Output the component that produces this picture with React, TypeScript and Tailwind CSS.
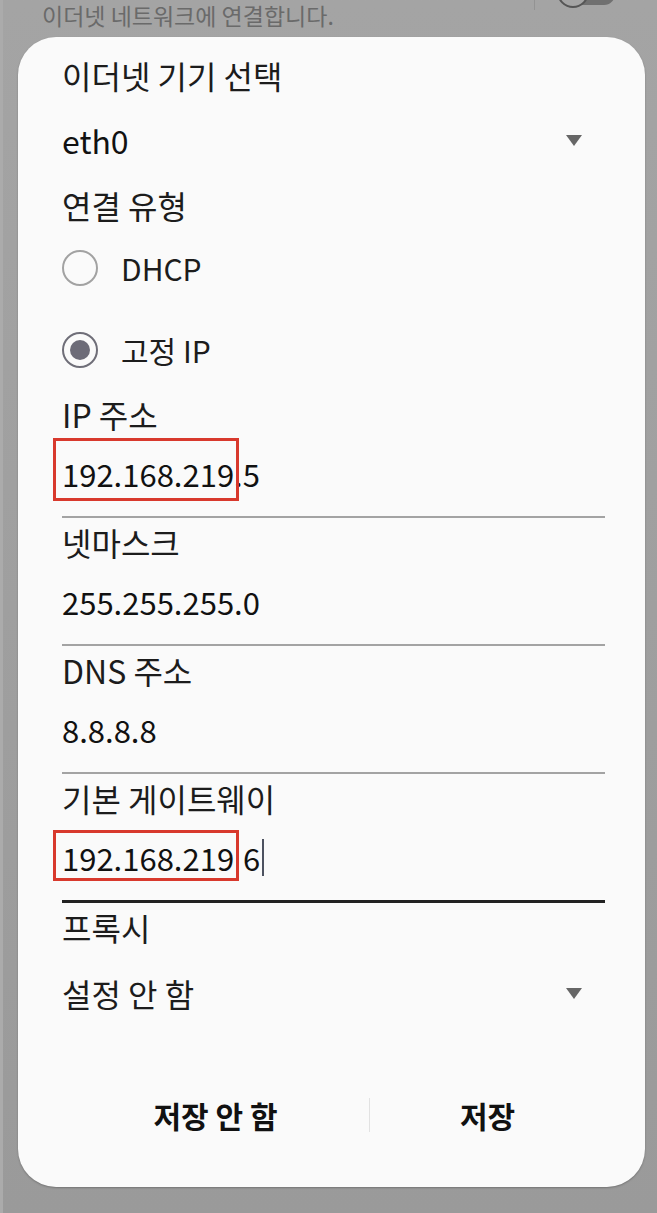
import React from "react";

const FONT = "font-['Noto_Sans_CJK_KR','Noto_Sans',sans-serif]";

function Caret() {
  return (
    <svg width="16" height="11" viewBox="0 0 16 11" className="mr-[23px]">
      <polygon points="0,0 16,0 8,11" fill="#666666" />
    </svg>
  );
}

function Radio({ checked, label }: { checked?: boolean; label: string }) {
  return (
    <div className="h-[62px] flex items-center">
      <div
        className={
          checked
            ? "w-[36px] h-[36px] rounded-full border-2 border-[#6f6e78] flex items-center justify-center"
            : "w-[36px] h-[36px] rounded-full border-2 border-[#a2a2a2]"
        }
      >
        {checked && <div className="w-[20px] h-[20px] rounded-full bg-[#6d6c78]" />}
      </div>
      <span className="ml-[23px] text-[30px] leading-none text-[#1c1c1c]">{label}</span>
    </div>
  );
}

function Field({
  label,
  children,
  thick,
}: {
  label: string;
  children: React.ReactNode;
  thick?: boolean;
}) {
  return (
    <div className="flex flex-col">
      <div className="h-[48px] flex items-center text-[32px] leading-none text-[#1c1c1c]">{label}</div>
      <div className="h-[71px] flex items-center text-[31px] leading-none text-[#111111]">{children}</div>
      <div className="h-[7px]" />
      <div className={thick ? "h-[3px] bg-[#222222]" : "h-[2px] bg-[#a3a3a3]"} />
    </div>
  );
}

export default function App() {
  return (
    <div
      className={`min-h-screen w-full overflow-hidden bg-gradient-to-b from-[#a4a4a4] to-[#9a9a9a] border-l-[3px] border-[#ababab] ${FONT}`}
    >
      {/* dimmed settings row behind the dialog */}
      <div className="h-[37px] flex items-start">
        <p className="shrink-0 ml-[39px] mt-[1px] text-[23px] leading-[28px] text-[#6a6a6a]">
          이더넷 네트워크에 연결합니다.
        </p>
        <div className="ml-auto w-[1px] h-[10px] bg-[#939393]" />
        <div className="relative ml-[22px] mr-[42px] -mt-[24px] w-[58px] h-[32px]">
          <div className="absolute left-[16px] right-0 top-[7px] h-[22px] rounded-r-full bg-[#707070]" />
          <div className="absolute left-0 top-0 w-[32px] h-[32px] rounded-full border-2 border-[#555555] bg-[#a4a4a4]" />
        </div>
      </div>

      {/* dialog */}
      <div className="ml-[15px] w-[627px] bg-[#fafafa] rounded-[38px] shadow-[0_1px_2px_rgba(0,0,0,0.25)] pl-[44px] pr-[40px] pt-[6px] pb-[40px] flex flex-col">
        <div className="h-[64px] flex items-center text-[32px] leading-none text-[#1c1c1c]">이더넷 기기 선택</div>
        <div className="h-[66px] flex items-center justify-between text-[32px] leading-none text-[#111111]">
          <span>eth0</span>
          <Caret />
        </div>
        <div className="h-[64px] flex items-center text-[32px] leading-none text-[#1c1c1c]">연결 유형</div>
        <Radio label="DHCP" />
        <div className="h-[20px]" />
        <Radio checked label="고정 IP" />
        <div className="h-[9px]" />

        <Field label="IP 주소">
          <span className="relative inline-block">
            192.168.219
            <span className="absolute -left-[9px] -right-[5px] -top-[20px] -bottom-[12px] border-[3px] border-[#d8392d]" />
          </span>
          <span>.5</span>
        </Field>
        <Field label="넷마스크">255.255.255.0</Field>
        <Field label="DNS 주소">8.8.8.8</Field>
        <Field label="기본 게이트웨이" thick>
          <span className="relative inline-block">
            192.168.219
            <span className="absolute -left-[9px] -right-[5px] -top-[12px] -bottom-[8px] border-[3px] border-[#d8392d]" />
          </span>
          <span className="ml-[9px]">6</span>
          <span className="ml-[2px] w-[2px] h-[37px] bg-[#4d5260]" />
        </Field>

        <div className="h-[48px] flex items-center text-[32px] leading-none text-[#1c1c1c]">프록시</div>
        <div className="h-[84px] flex items-center justify-between text-[32px] leading-none text-[#1c1c1c]">
          <span>설정 안 함</span>
          <Caret />
        </div>

        <div className="mt-[48px] h-[64px] flex items-center">
          <div className="w-[307px] flex justify-center text-[30px] font-bold leading-none text-[#111111]">저장 안 함</div>
          <div className="w-[1px] h-[34px] bg-[#e2e2e2]" />
          <div className="flex-1 flex justify-center text-[30px] font-bold leading-none text-[#111111]">저장</div>
        </div>
      </div>
    </div>
  );
}
